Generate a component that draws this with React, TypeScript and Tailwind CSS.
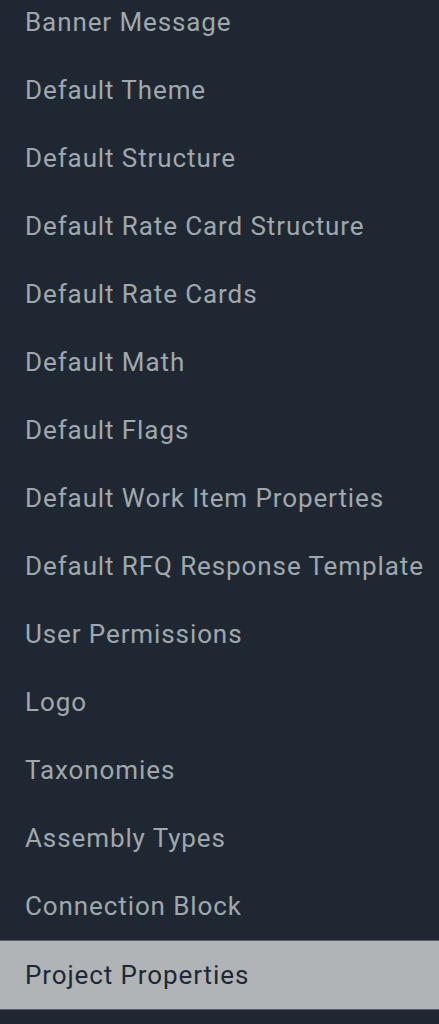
import React from 'react'

const items = [
  'Banner Message',
  'Default Theme',
  'Default Structure',
  'Default Rate Card Structure',
  'Default Rate Cards',
  'Default Math',
  'Default Flags',
  'Default Work Item Properties',
  'Default RFQ Response Template',
  'User Permissions',
  'Logo',
  'Taxonomies',
  'Assembly Types',
  'Connection Block',
  'Project Properties'
]

const active = 'Project Properties'

export default function App() {
  return (
    <nav
      className="w-[439px] h-[1024px] overflow-hidden bg-[#1f2832]"
      style={{ fontFamily: 'Roboto, "Liberation Sans", sans-serif' }}
    >
      <ul className="-mt-[12px]">
        {items.map((item) => {
          const isActive = item === active
          return (
            <li
              key={item}
              className={
                isActive
                  ? 'h-[70px] flex items-center px-[25px] bg-[#b0b4b7] text-[#1f2832] border-y border-[#56616b] text-[26px] tracking-[0.9px] whitespace-nowrap'
                  : 'h-[68px] flex items-center px-[25px] text-[#a0a7ad] text-[26px] tracking-[0.9px] whitespace-nowrap'
              }
            >
              {item}
            </li>
          )
        })}
      </ul>
    </nav>
  )
}
